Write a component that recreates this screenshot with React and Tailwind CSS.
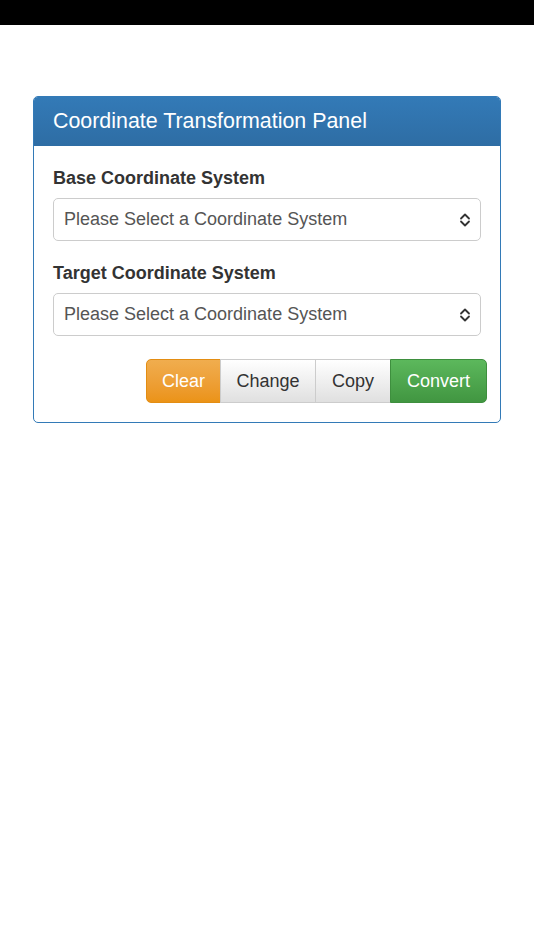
import React, { useState } from "react";

const font = { fontFamily: '"Liberation Sans", Arial, sans-serif' };

// up/down chevrons drawn like the native iOS select arrow
const SelectArrows = () => (
  <svg
    className="pointer-events-none absolute right-[10px] top-1/2 -translate-y-1/2"
    width="12"
    height="16"
    viewBox="0 0 12 16"
    fill="none"
    stroke="#333"
    strokeWidth="1.8"
    strokeLinecap="round"
    strokeLinejoin="round"
  >
    <path d="M2 6.5 L6 2.5 L10 6.5" />
    <path d="M2 9.5 L6 13.5 L10 9.5" />
  </svg>
);

const CoordSelect = ({ label, value, onChange }) => (
  <div className="flex flex-col">
    <label className="mb-[9px] text-[18px] font-bold leading-[22px] text-[#333]">
      {label}
    </label>
    <div className="relative">
      <select
        value={value}
        onChange={(e) => onChange(e.target.value)}
        className="h-[43px] w-full appearance-none rounded-[5px] border border-[#ccc] bg-white pl-[10px] pr-8 text-[18px] text-[#555] outline-none"
        style={font}
      >
        <option value="">Please Select a Coordinate System</option>
        <option value="wgs84">WGS84</option>
        <option value="gcj02">GCJ02</option>
        <option value="bd09">BD09</option>
      </select>
      <SelectArrows />
    </div>
  </div>
);

export default function App() {
  const [base, setBase] = useState("");
  const [target, setTarget] = useState("");

  return (
    <div className="min-h-[950px] bg-white" style={font}>
      <div className="h-[25px] bg-black" />

      <div className="px-[33px] pt-[71px]">
        <div className="overflow-hidden rounded-[5px] border border-[#337ab7] bg-white">
          <div className="flex h-[49px] items-center bg-gradient-to-b from-[#337ab7] to-[#2e6da4] px-[19px] text-[21.4px] text-white">
            Coordinate Transformation Panel
          </div>

          <div className="flex flex-col px-[19px] pt-[21px] pb-[19px]">
            <CoordSelect label="Base Coordinate System" value={base} onChange={setBase} />
            <div className="h-[21px]" />
            <CoordSelect label="Target Coordinate System" value={target} onChange={setTarget} />

            <div className="mr-[-6px] mt-[23px] flex justify-end">
              <div className="flex h-[44px] text-[18px]">
                <button
                  onClick={() => {
                    setBase("");
                    setTarget("");
                  }}
                  className="w-[75px] rounded-l-[5px] border border-[#e38d13] bg-gradient-to-b from-[#f0ad4e] to-[#eb9316] text-white"
                >
                  Clear
                </button>
                <button
                  onClick={() => {
                    setBase(target);
                    setTarget(base);
                  }}
                  className="-ml-px w-[96px] border border-[#ccc] bg-gradient-to-b from-white to-[#e0e0e0] text-[#333]"
                >
                  Change
                </button>
                <button className="-ml-px w-[76px] border border-[#ccc] bg-gradient-to-b from-white to-[#e0e0e0] text-[#333]">
                  Copy
                </button>
                <button className="-ml-px w-[97px] rounded-r-[5px] border border-[#3e8f3e] bg-gradient-to-b from-[#5cb85c] to-[#419641] text-white">
                  Convert
                </button>
              </div>
            </div>
          </div>
        </div>
      </div>
    </div>
  );
}
